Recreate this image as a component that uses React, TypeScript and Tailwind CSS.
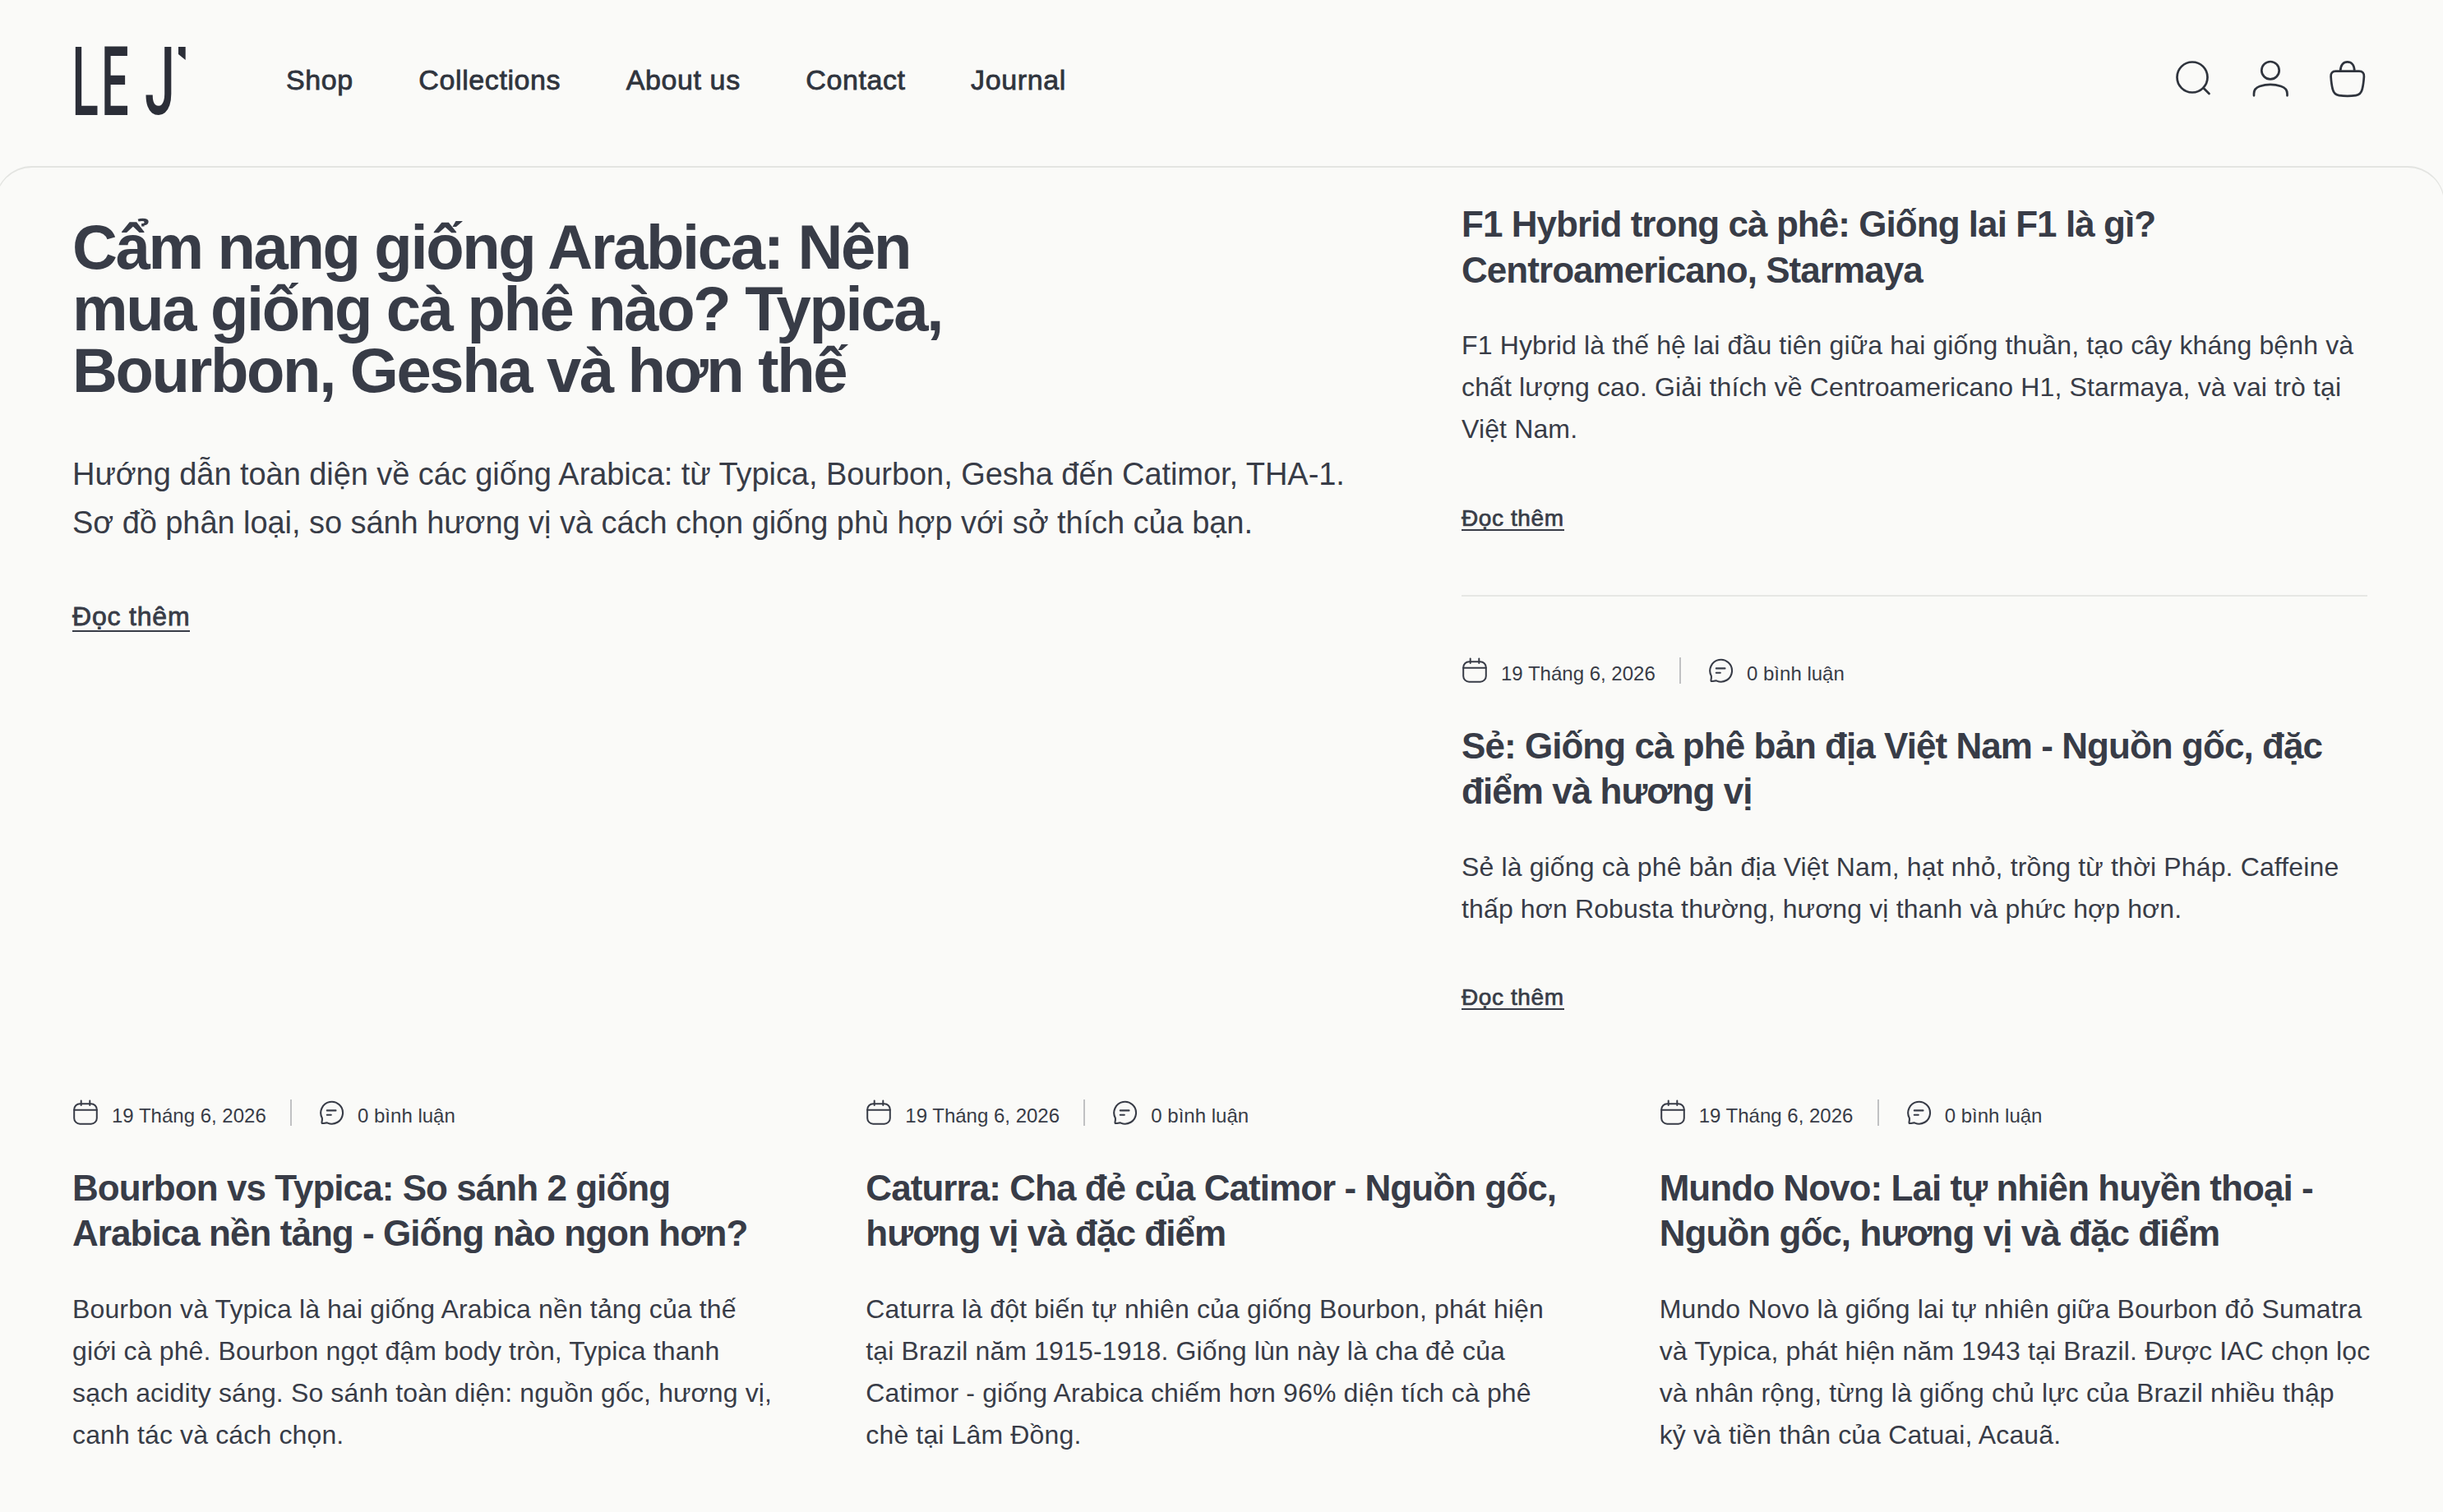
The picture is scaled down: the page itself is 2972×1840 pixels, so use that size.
import React from 'react';

const NAV_ITEMS = ['Shop', 'Collections', 'About us', 'Contact', 'Journal'];

const SIDE_POSTS = [
  {
    title: ['F1 Hybrid trong cà phê: Giống lai F1 là gì?', 'Centroamericano, Starmaya'],
    excerpt: [
      'F1 Hybrid là thế hệ lai đầu tiên giữa hai giống thuần, tạo cây kháng bệnh và',
      'chất lượng cao. Giải thích về Centroamericano H1, Starmaya, và vai trò tại',
      'Việt Nam.',
    ],
  },
  {
    title: ['Sẻ: Giống cà phê bản địa Việt Nam - Nguồn gốc, đặc', 'điểm và hương vị'],
    excerpt: [
      'Sẻ là giống cà phê bản địa Việt Nam, hạt nhỏ, trồng từ thời Pháp. Caffeine',
      'thấp hơn Robusta thường, hương vị thanh và phức hợp hơn.',
    ],
  },
];

const GRID_POSTS = [
  {
    title: ['Bourbon vs Typica: So sánh 2 giống', 'Arabica nền tảng - Giống nào ngon hơn?'],
    excerpt: [
      'Bourbon và Typica là hai giống Arabica nền tảng của thế',
      'giới cà phê. Bourbon ngọt đậm body tròn, Typica thanh',
      'sạch acidity sáng. So sánh toàn diện: nguồn gốc, hương vị,',
      'canh tác và cách chọn.',
    ],
  },
  {
    title: ['Caturra: Cha đẻ của Catimor - Nguồn gốc,', 'hương vị và đặc điểm'],
    excerpt: [
      'Caturra là đột biến tự nhiên của giống Bourbon, phát hiện',
      'tại Brazil năm 1915-1918. Giống lùn này là cha đẻ của',
      'Catimor - giống Arabica chiếm hơn 96% diện tích cà phê',
      'chè tại Lâm Đồng.',
    ],
  },
  {
    title: ['Mundo Novo: Lai tự nhiên huyền thoại -', 'Nguồn gốc, hương vị và đặc điểm'],
    excerpt: [
      'Mundo Novo là giống lai tự nhiên giữa Bourbon đỏ Sumatra',
      'và Typica, phát hiện năm 1943 tại Brazil. Được IAC chọn lọc',
      'và nhân rộng, từng là giống chủ lực của Brazil nhiều thập',
      'kỷ và tiền thân của Catuai, Acauã.',
    ],
  },
];

function Lines({ lines }: { lines: string[] }) {
  return (
    <>
      {lines.map((line) => (
        <span key={line} className="block whitespace-nowrap">{line}</span>
      ))}
    </>
  );
}

function Logo() {
  return (
    <svg className="mt-[56px] ml-[2px] h-[90px] w-[138px] shrink-0 overflow-visible" viewBox="0 0 138 90" fill="#2b2e38">
      <g fontFamily="Roboto, sans-serif" fontSize="116.7" fontWeight="500">
        <text transform="translate(-2.500 83.700) scale(0.513 1)">L</text>
        <text transform="translate(32.900 83.700) scale(0.511 1)">E</text>
        <text transform="translate(85.900 82.500) scale(0.569 0.985)">J</text>
      </g>
      <path d="M127 1h8.700v16L127 10Z" />
    </svg>
  );
}

function HeaderIcons() {
  const iconClass = 'h-12 w-14';
  return (
    <div className="mt-[72px] ml-auto flex gap-[38px] [&_svg]:fill-none [&_svg]:stroke-current [&_svg]:stroke-[2.7]">
      <svg className={iconClass} viewBox="0 0 56 48" strokeLinecap="round">
        <circle cx="27" cy="22" r="18.500" />
        <path d="m40.500 35 7 7" />
      </svg>
      <svg className={iconClass} viewBox="0 0 56 48" strokeLinecap="round">
        <circle cx="28" cy="13.700" r="10.700" />
        <path d="M8 44.300V42c0-5 2.500-7.500 7-9 8-2.700 18-2.700 26 0 4.500 1.500 7.500 4 7.500 9v2.300" />
      </svg>
      <svg className={iconClass} viewBox="0 0 56 48" strokeLinecap="round" strokeLinejoin="round">
        <path d="M19.200 14.500C19.200 7 23 3.300 27.700 3.300S36.300 7 36.300 14.500" />
        <path d="M13.500 14.700h28.500c4 0 6.200 2.500 5.900 6.500-.4 6-1 11-2.200 15.500-1.100 4.300-3.100 6.800-7.700 7.500-6.500.9-14 .9-20.500 0-4.600-.7-6.600-3.200-7.700-7.500C8.600 32.200 8 27.200 7.600 21.200c-.3-4 1.900-6.500 5.900-6.500Z" />
      </svg>
    </div>
  );
}

function PostMeta() {
  return (
    <div className="flex h-8 items-start text-[24px] leading-8">
      <svg className="h-8 w-8 shrink-0" viewBox="0 0 32 32" fill="none" stroke="currentColor" strokeWidth="2" strokeLinecap="round">
        <rect x="2.200" y="5.200" width="27.600" height="24.500" rx="7" />
        <path d="M2.200 12.800h27.600M10.700 1.500v5.500M21.300 1.500v5.500" />
      </svg>
      <span className="ml-[16px] w-[188px] pt-1 whitespace-nowrap">19 Tháng 6, 2026</span>
      <span className="ml-[29px] h-8 w-[2px] bg-[#c0c1c3]" />
      <svg className="ml-[32px] h-8 w-8 shrink-0" viewBox="0 0 32 32" fill="none" stroke="currentColor" strokeWidth="2.100" strokeLinecap="round" strokeLinejoin="round">
        <path d="M4.800 22.500A13.400 13.400 0 1 1 11.500 28.600c-2.300-.8-4 .9-6.700.4-1-1 .6-3.200 0-6.500Z" />
        <path d="M10.800 13.400h10.700M10.800 18.800h5" />
      </svg>
      <span className="ml-[16px] pt-1 whitespace-nowrap">0 bình luận</span>
    </div>
  );
}

function PostTitle({ lines }: { lines: string[] }) {
  return (
    <h2 className="text-[44px] leading-[55.5px] font-bold tracking-[-0.95px]">
      <Lines lines={lines} />
    </h2>
  );
}

function Excerpt({ lines }: { lines: string[] }) {
  return (
    <p className="mt-[39px] text-[32px] leading-[51.2px] tracking-[0.14px]">
      <Lines lines={lines} />
    </p>
  );
}

function ReadMore() {
  return (
    <a className="mt-[69px] block w-fit border-b-2 border-current text-[28px] leading-[26px] tracking-[0.6px] [-webkit-text-stroke:0.7px_currentColor]">
      Đọc thêm
    </a>
  );
}

export default function App() {
  return (
    <div className="h-[1840px] w-[2972px] overflow-hidden bg-[#fafaf8] font-['Liberation_Sans',Arial,sans-serif] text-[#383c47]">
      <header className="flex h-[202px] items-start px-[88px] text-[#2f343d]">
        <Logo />
        <nav className="mt-[75px] ml-[120px] flex gap-[79.5px] text-[34px] leading-[44px] tracking-[0.6px] [-webkit-text-stroke:0.8px_currentColor]">
          {NAV_ITEMS.map((item) => (
            <a key={item} className="whitespace-nowrap">{item}</a>
          ))}
        </nav>
        <HeaderIcons />
      </header>

      {/* Panel runs slightly past both window edges */}
      <main className="-mr-[2px] -ml-[6px] h-[1638px] rounded-t-[45px] border-x border-t-2 border-[#e3e4e1] pr-[89px] pl-[93px]">
        <section className="flex h-[1134px] justify-between">
          <article className="pt-[59px]">
            <h1 className="text-[76px] leading-[75px] font-bold tracking-[-2.35px]">
              <Lines lines={['Cẩm nang giống Arabica: Nên', 'mua giống cà phê nào? Typica,', 'Bourbon, Gesha và hơn thế']} />
            </h1>
            <p className="mt-[60px] text-[38px] leading-[59.3px] tracking-[-0.06px]">
              <Lines
                lines={[
                  'Hướng dẫn toàn diện về các giống Arabica: từ Typica, Bourbon, Gesha đến Catimor, THA-1.',
                  'Sơ đồ phân loại, so sánh hương vị và cách chọn giống phù hợp với sở thích của bạn.',
                ]}
              />
            </p>
            <a className="mt-[67px] block w-fit border-b-2 border-current text-[32px] leading-[33px] tracking-[0.8px] [-webkit-text-stroke:0.8px_currentColor]">
              Đọc thêm
            </a>
          </article>

          <aside className="mr-1 w-[1102px] pt-[41px]">
            <PostTitle lines={SIDE_POSTS[0].title} />
            <Excerpt lines={SIDE_POSTS[0].excerpt} />
            <ReadMore />
            <hr className="mt-[78px] mb-[74px] border-t-2 border-[#e6e7e4]" />
            <PostMeta />
            <div className="mt-12">
              <PostTitle lines={SIDE_POSTS[1].title} />
            </div>
            <Excerpt lines={SIDE_POSTS[1].excerpt} />
            <ReadMore />
          </aside>
        </section>

        <section className="grid grid-cols-3 gap-[100px]">
          {GRID_POSTS.map((post) => (
            <article key={post.title[0]}>
              <PostMeta />
              <div className="mt-[47.5px]">
                <PostTitle lines={post.title} />
              </div>
              <Excerpt lines={post.excerpt} />
            </article>
          ))}
        </section>
      </main>
    </div>
  );
}
